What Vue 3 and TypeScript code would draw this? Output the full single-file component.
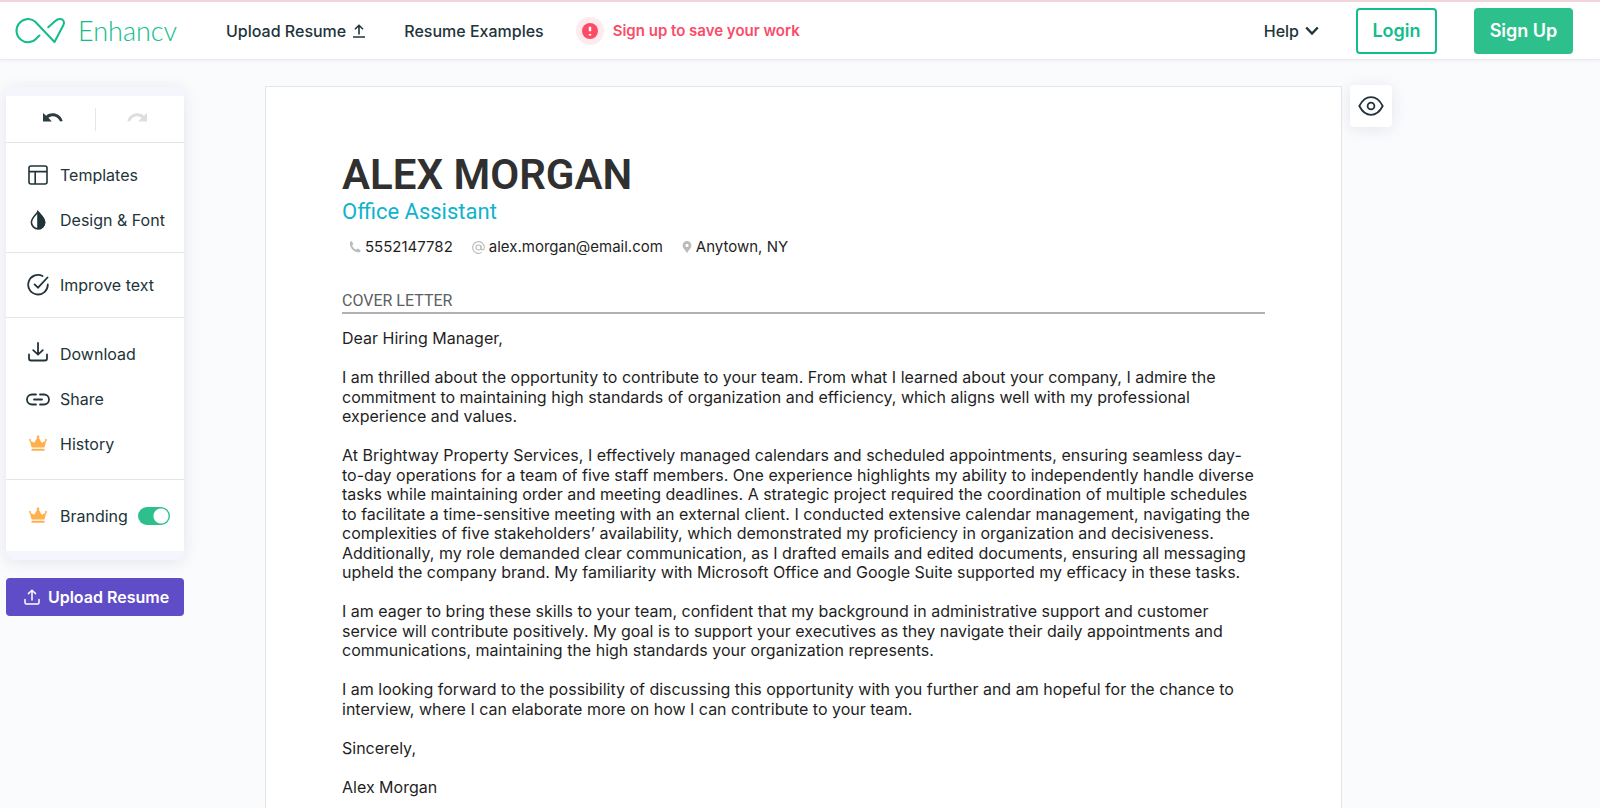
<script setup lang="ts">
import { ref } from 'vue'

const branding = ref(true)

const paragraphs: string[] = [
  'Dear Hiring Manager,',
  'I am thrilled about the opportunity to contribute to your team. From what I learned about your company, I admire the commitment to maintaining high standards of organization and efficiency, which aligns well with my professional experience and values.',
  'At Brightway Property Services, I effectively managed calendars and scheduled appointments, ensuring seamless day-to-day operations for a team of five staff members. One experience highlights my ability to independently handle diverse tasks while maintaining order and meeting deadlines. A strategic project required the coordination of multiple schedules to facilitate a time-sensitive meeting with an external client. I conducted extensive calendar management, navigating the complexities of five stakeholders’ availability, which demonstrated my proficiency in organization and decisiveness. Additionally, my role demanded clear communication, as I drafted emails and edited documents, ensuring all messaging upheld the company brand. My familiarity with Microsoft Office and Google Suite supported my efficacy in these tasks.',
  'I am eager to bring these skills to your team, confident that my background in administrative support and customer service will contribute positively. My goal is to support your executives as they navigate their daily appointments and communications, maintaining the high standards your organization represents.',
  'I am looking forward to the possibility of discussing this opportunity with you further and am hopeful for the chance to interview, where I can elaborate more on how I can contribute to your team.',
  'Sincerely,',
  'Alex Morgan',
]
</script>

<template>
  <div class="app">
    <header class="topbar">
      <a class="logo" href="#">
        <svg class="logo-mark" width="52" height="28" viewBox="0 0 52 28" fill="none" stroke="#12bd8b" stroke-width="2" stroke-linecap="round" stroke-linejoin="round">
          <path d="M25.500 18.500L23 20.800A11.500 11.500 0 1 1 21 4.500L40.500 25L49.300 8.200C51.200 4.500 49 2 46 2C43.800 2 42.500 2.800 41 4.200L34.200 10.300" />
        </svg>
        <span class="logo-name">Enhancv</span>
      </a>
      <nav class="nav">
        <a class="nav-link" href="#">
          Upload Resume
          <svg width="14" height="16" viewBox="0 0 14 16" fill="none" stroke="currentColor" stroke-width="1.600">
            <path d="M1 14h12M7 11.500V2.500M3 6.300L7 2.300L11 6.300" />
          </svg>
        </a>
        <a class="nav-link examples" href="#">Resume Examples</a>
        <a class="nav-link save" href="#">
          <svg width="28" height="28" viewBox="0 0 28 28">
            <circle cx="14" cy="14" r="14" fill="#ffeaed" />
            <circle cx="14" cy="14" r="8" fill="#fb4b67" />
            <path d="M14 9.800v4.500M14 17v1.400" stroke="#fff" stroke-width="2.400" />
          </svg>
          Sign up to save your work
        </a>
      </nav>
      <div class="account">
        <button class="help" type="button">
          Help
          <svg width="14" height="10" viewBox="0 0 14 10" fill="none" stroke="currentColor" stroke-width="2.400">
            <path d="M1.200 1.500L7 7.500L12.800 1.500" />
          </svg>
        </button>
        <button class="login" type="button">Login</button>
        <button class="signup" type="button">Sign Up</button>
      </div>
    </header>

    <div class="workspace">
      <aside class="side">
        <div class="panel">
          <div class="history-bar">
            <button type="button" class="tool" aria-label="Undo">
              <svg width="20" height="10" viewBox="0 0 20 10">
                <path d="M0 0L3.200 2.700C7.500-1 16.500-1 19.700 8L17.200 8.600C14.500 2.800 9 2 5.400 4.800L8.800 8.400H0Z" fill="#2c3c41" />
              </svg>
            </button>
            <span class="separator"></span>
            <button type="button" class="tool" aria-label="Redo" disabled>
              <svg width="20" height="10" viewBox="0 0 20 10">
                <path d="M20 0L16.800 2.700C12.500-1 3.500-1 .3 8L2.800 8.600C5.500 2.800 11 2 14.600 4.800L11.200 8.400H20Z" fill="#dcdedf" />
              </svg>
            </button>
          </div>

          <div class="group">
            <button type="button" class="item">
              <svg width="24" height="24" viewBox="0 0 24 24" fill="none" stroke="currentColor" stroke-width="1.600">
                <rect x="3" y="3" width="18" height="18" rx="2" />
                <path d="M3 8.600h18M9.200 8.600V21" />
              </svg>
              Templates
            </button>
            <button type="button" class="item">
              <svg width="24" height="24" viewBox="0 0 24 24" fill="none" stroke="currentColor" stroke-width="1.600">
                <path d="M12 4C9 7.500 5.400 10.500 5.400 14.200A6.600 6.600 0 0 0 18.600 14.200C18.600 10.500 15 7.500 12 4Z" />
                <path d="M12 4C15 7.500 18.600 10.500 18.600 14.200A6.600 6.600 0 0 1 12 20.800Z" fill="currentColor" />
              </svg>
              Design &amp; Font
            </button>
          </div>

          <div class="group">
            <button type="button" class="item">
              <svg width="24" height="24" viewBox="0 0 24 24" fill="none" stroke="currentColor" stroke-width="1.800" stroke-linecap="round">
                <path d="M16.500 3A9.800 9.800 0 1 0 21.800 11.500M8.600 11.400L12 14.700L21.500 4.500" />
              </svg>
              Improve text
            </button>
          </div>

          <div class="group roomy">
            <button type="button" class="item">
              <svg width="24" height="24" viewBox="0 0 24 24" fill="none" stroke="currentColor" stroke-width="1.800" stroke-linecap="round" stroke-linejoin="round">
                <path d="M3 12.500V16.500Q3 18.500 5 18.500H19Q21 18.500 21 16.500V12.500M12 1V12M7.200 8.200L12 12.600L16.800 8.200" />
              </svg>
              Download
            </button>
            <button type="button" class="item">
              <svg width="24" height="24" viewBox="0 0 24 24" fill="none" stroke="currentColor" stroke-width="1.800" stroke-linecap="round">
                <path d="M10 7.500H6A5 5 0 0 0 6 17.500H10M14 7.500H18A5 5 0 0 1 18 17.500H14M8 12.500H16" />
              </svg>
              Share
            </button>
            <button type="button" class="item">
              <svg width="24" height="24" viewBox="0 0 24 24" fill="#ffb04c">
                <path d="M5.600 15.600L3.700 8.500L8.200 10.800L11.300 5.500H12.700L15.800 10.800L20.300 8.500L18.400 15.600Z" />
                <circle cx="4" cy="8" r="1.100" /><circle cx="12" cy="4.800" r="1.400" /><circle cx="20" cy="8" r="1.100" />
                <rect x="5.500" y="16.800" width="13" height="2" rx=".6" />
              </svg>
              History
            </button>
          </div>

          <div class="group roomy">
            <label class="item">
              <svg width="24" height="24" viewBox="0 0 24 24" fill="#ffb04c">
                <path d="M5.600 15.600L3.700 8.500L8.200 10.800L11.300 5.500H12.700L15.800 10.800L20.300 8.500L18.400 15.600Z" />
                <circle cx="4" cy="8" r="1.100" /><circle cx="12" cy="4.800" r="1.400" /><circle cx="20" cy="8" r="1.100" />
                <rect x="5.500" y="16.800" width="13" height="2" rx=".6" />
              </svg>
              Branding
              <input v-model="branding" class="switch" type="checkbox" />
            </label>
          </div>
        </div>

        <button type="button" class="upload">
          <svg width="16" height="16" viewBox="0 0 16 16" fill="none" stroke="currentColor" stroke-width="1.500" stroke-linecap="round" stroke-linejoin="round">
            <path d="M1 10.500V13.500Q1 15 2.500 15H13.500Q15 15 15 13.500V10.500M8 11V1.200M4.400 4.600L8 1.200L11.600 4.600" />
          </svg>
          Upload Resume
        </button>
      </aside>

      <main class="paper">
        <h1 class="name">ALEX MORGAN</h1>
        <p class="role">Office Assistant</p>
        <ul class="contacts">
          <li>
            <svg width="12" height="12" viewBox="0 0 12 12" fill="#b9bbbc">
              <path d="M1 .8L3 .3L4.300 3.300L3.100 4.500C3.700 6.300 5.300 8 7.200 8.800L8.500 7.600L11.600 9L11.200 11C5.500 12.200 0 7 1 .8Z" />
            </svg>
            5552147782
          </li>
          <li>
            <svg width="13" height="13" viewBox="0 0 12 12" fill="none" stroke="#b9bbbc" stroke-width="1">
              <circle cx="6" cy="6" r="2.300" />
              <path d="M8.300 3.700V6.800C8.300 8.900 11.400 8.600 11.400 6A5.400 5.400 0 1 0 9 10.500" />
            </svg>
            alex.morgan@email.com
          </li>
          <li>
            <svg width="10" height="12" viewBox="0 0 10 12" fill="#b9bbbc">
              <path fill-rule="evenodd" d="M5 0A4.400 4.400 0 0 0 .6 4.400C.6 7 3 8.500 5 12C7 8.500 9.400 7 9.400 4.400A4.400 4.400 0 0 0 5 0ZM5 2.800A1.600 1.600 0 1 1 5 6A1.600 1.600 0 0 1 5 2.800Z" />
            </svg>
            Anytown, NY
          </li>
        </ul>
        <h2 class="section">COVER LETTER</h2>
        <div class="letter">
          <p v-for="text in paragraphs" :key="text">{{ text }}</p>
        </div>
      </main>

      <button type="button" class="preview" aria-label="Preview">
        <svg width="26" height="20" viewBox="0 0 26 20" fill="none" stroke="#20343a" stroke-width="1.800">
          <path d="M1.300 10C4.500 3.800 8.500 1.200 13 1.200S21.500 3.800 24.700 10C21.500 16.200 17.500 18.800 13 18.800S4.500 16.200 1.300 10Z" />
          <circle cx="13" cy="10" r="3.400" />
        </svg>
      </button>
    </div>
  </div>
</template>

<style>
html,
body {
  margin: 0;
  height: 100%;
  overflow: hidden;
  background: #fafbfd;
}
</style>

<style scoped>
.app {
  font-family: Inter, "Liberation Sans", sans-serif;
  font-size: 16px;
  color: #22343a;
}

.app *,
.app {
  box-sizing: border-box;
}

button {
  font: inherit;
  color: inherit;
  padding: 0;
  border: 0;
  background: none;
  cursor: pointer;
}

a {
  color: inherit;
  text-decoration: none;
}

.topbar {
  display: flex;
  align-items: center;
  height: 60px;
  padding: 0 27px 0 14px;
  background: #fff;
  border-top: 2px solid #efd5d9;
  border-bottom: 1px solid #ebecee;
  box-shadow: 0 1px 3px rgba(30, 40, 60, 0.06);
}

.logo {
  display: flex;
  align-items: center;
  gap: 12px;
  width: 212px;
}

.logo-mark {
  flex: none;
}

.logo-name {
  font-family: Lato, sans-serif;
  font-weight: 300;
  font-size: 27px;
  line-height: 30px;
  color: #12bd8b;
}

.nav {
  display: flex;
  align-items: center;
  flex: 1;
}

.nav-link {
  display: flex;
  align-items: center;
  gap: 6px;
  font-weight: 500;
  white-space: nowrap;
}

.examples {
  margin: 0 32px 0 38px;
}

.save {
  gap: 9px;
  font-size: 15px;
  font-weight: 600;
  color: #fb4b67;
}

.account {
  display: flex;
  align-items: center;
}

.help {
  display: flex;
  align-items: center;
  gap: 6px;
  margin-right: 37px;
  font-weight: 500;
}

.login,
.signup {
  height: 46px;
  border-radius: 4px;
  font-size: 18px;
  font-weight: 600;
}

.login {
  width: 81px;
  margin-right: 37px;
  border: 2px solid #12bd8b;
  color: #12bd8b;
}

.signup {
  width: 99px;
  background: #2dc08d;
  color: #fff;
}

.workspace {
  display: grid;
  grid-template-columns: 259px minmax(0, 1fr) 258px;
  align-items: start;
  padding-left: 6px;
}

.side {
  width: 178px;
  padding-top: 27px;
}

.panel {
  padding: 9px 0;
  border-radius: 8px;
  background: #f5f6fd;
  box-shadow: 0 2px 16px rgba(30, 40, 60, 0.1);
}

.history-bar {
  display: flex;
  align-items: center;
  height: 46px;
  padding: 0 6px;
  background: #fff;
}

.tool {
  flex: 1;
  height: 46px;
  padding-bottom: 4px;
}

.separator {
  width: 1px;
  height: 23px;
  background: #e4e6e8;
}

.group {
  padding: 9px 0 10px;
  border-top: 1px solid #e2e4e6;
  background: #fff;
}

.roomy {
  padding: 13px 0;
}

.item {
  display: flex;
  align-items: center;
  gap: 10px;
  width: 100%;
  height: 45px;
  padding-left: 20px;
  white-space: nowrap;
}

.switch {
  appearance: none;
  width: 32px;
  height: 18px;
  margin: 0;
  border-radius: 9px;
  background: #c7cccf radial-gradient(circle at 9px 9px, #fff 7px, transparent 8px);
  cursor: pointer;
}

.switch:checked {
  background: #2dc08d radial-gradient(circle at 23px 9px, #fff 7px, transparent 8px);
}

.upload {
  display: flex;
  align-items: center;
  justify-content: center;
  gap: 8px;
  width: 100%;
  height: 38px;
  margin-top: 18px;
  padding-left: 3px;
  border-radius: 4px;
  background: #5f4cc7;
  color: #fff;
  font-weight: 600;
}

.paper {
  margin-top: 26px;
  padding: 65px 76px 0;
  border: 1px solid #e3e5e8;
  background: #fff;
  color: #1f1f1f;
}

.name {
  margin: 0;
  font-family: Roboto, sans-serif;
  font-weight: 600;
  font-size: 42px;
  line-height: 46px;
  color: #303030;
}

.role {
  margin: 0;
  font-family: Roboto, sans-serif;
  font-size: 22px;
  line-height: 28px;
  color: #0fb3cc;
}

.contacts {
  display: flex;
  gap: 19px;
  margin: 10px 0 0;
  padding: 0 0 0 7px;
  list-style: none;
  font-size: 15px;
  line-height: 22px;
}

.contacts li {
  display: flex;
  align-items: center;
  gap: 4px;
}

.section {
  margin: 32px 0 0;
  border-bottom: 2px solid #b1b1b1;
  font-family: Roboto, sans-serif;
  font-weight: 400;
  font-size: 16px;
  line-height: 22px;
  color: #5b6063;
}

.letter {
  padding: 15px 4px 0 0;
  font-size: 16px;
  line-height: 1.22;
}

.letter p {
  margin: 0 0 1.22em;
}

.preview {
  display: flex;
  align-items: center;
  justify-content: center;
  width: 42px;
  height: 42px;
  margin: 25px 0 0 8px;
  border-radius: 4px;
  background: #fff;
  box-shadow: 0 2px 16px rgba(30, 40, 60, 0.1);
}
</style>
